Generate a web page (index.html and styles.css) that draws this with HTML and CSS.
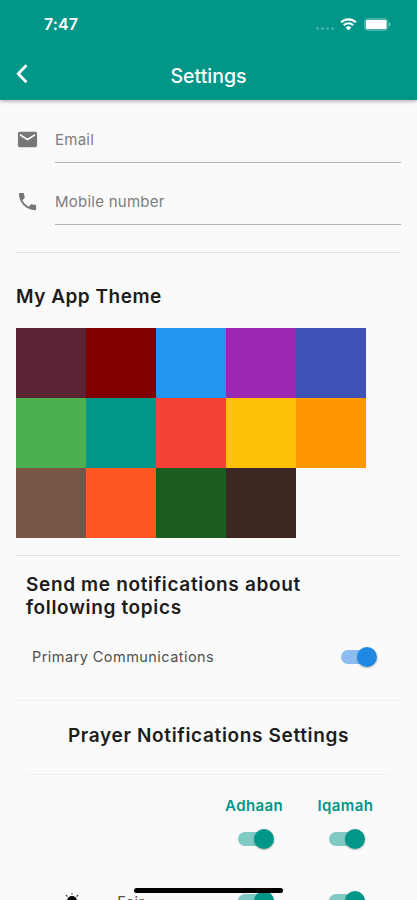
FILE: index.html
```html
<!DOCTYPE html>
<html lang="en">
<head>
  <meta charset="UTF-8" />
  <meta name="viewport" content="width=device-width, initial-scale=1.0" />
  <title>Settings</title>
  <link rel="stylesheet" href="styles.css">
</head>
<body>
  <div class="screen">
    <header class="header">
      <div class="status-bar">
        <span class="time">7:47</span>
        <div class="status-icons">
          <div class="signal"><i></i><i></i><i></i><i></i></div>
          <svg class="wifi" width="17" height="13" viewBox="0 0 17 13">
            <path d="M1.1 4.3a10.6 10.6 0 0 1 14.8 0" fill="none" stroke="#fff" stroke-width="2.3" />
            <path d="M3.8 7.2a6.8 6.8 0 0 1 9.4 0" fill="none" stroke="#fff" stroke-width="2" />
            <path d="M5.7 9.6a4.2 4.2 0 0 1 5.6 0L8.5 12.5z" fill="#fff" />
          </svg>
          <svg class="battery" width="27" height="13" viewBox="0 0 27 13">
            <rect x="0.5" y="0.5" width="23.5" height="12" rx="3" fill="none" stroke="#fff" stroke-opacity="0.3" />
            <rect x="1.7" y="1.7" width="21" height="9.6" rx="1.5" fill="#fff" />
            <path d="M25 4.3c1.8.6 1.8 3.8 0 4.4z" fill="#fff" fill-opacity="0.5" />
          </svg>
        </div>
      </div>
      <div class="nav">
        <svg class="back" width="13" height="20" viewBox="0 0 13 20">
          <path d="M10.5 1.3L2.2 9.8l8.3 8.5" fill="none" stroke="#fff" stroke-width="2.7" />
        </svg>
        <h1>Settings</h1>
      </div>
    </header>

    <main class="content">
      <div class="field">
        <svg width="23" height="23" viewBox="0 0 24 24">
          <path fill="#777" d="M20 4H4c-1.1 0-2 .9-2 2v12c0 1.1.9 2 2 2h16c1.1 0 2-.9 2-2V6c0-1.1-.9-2-2-2zm0 4l-8 5-8-5V6l8 5 8-5v2z" />
        </svg>
        <div class="input">Email</div>
      </div>
      <div class="field">
        <svg width="23" height="23" viewBox="0 0 24 24">
          <path fill="#777" d="M6.62 10.79c1.44 2.83 3.76 5.14 6.59 6.59l2.2-2.2c.27-.27.67-.36 1.02-.24 1.12.37 2.33.57 3.57.57.55 0 1 .45 1 1V20c0 .55-.45 1-1 1-9.39 0-17-7.61-17-17 0-.55.45-1 1-1h3.5c.55 0 1 .45 1 1 0 1.25.2 2.45.57 3.57.11.35.03.74-.25 1.02l-2.2 2.2z" />
        </svg>
        <div class="input">Mobile number</div>
      </div>

      <section class="theme">
        <h2>My App Theme</h2>
        <div class="swatches">
          <div class="plum"></div>
          <div class="maroon"></div>
          <div class="blue"></div>
          <div class="purple"></div>
          <div class="indigo"></div>
          <div class="green"></div>
          <div class="teal"></div>
          <div class="red"></div>
          <div class="amber"></div>
          <div class="orange"></div>
          <div class="brown"></div>
          <div class="deep-orange"></div>
          <div class="dark-green"></div>
          <div class="dark-brown"></div>
        </div>
      </section>

      <section class="topics">
        <h2>Send me notifications about<br>following topics</h2>
        <div class="topic">
          <span>Primary Communications</span>
          <div class="switch switch-blue"></div>
        </div>
      </section>

      <section class="prayers">
        <h2>Prayer Notifications Settings</h2>
        <div class="prayer-table">
          <div class="column-head adhaan">Adhaan</div>
          <div class="column-head">Iqamah</div>
          <div class="switch all-adhaan"></div>
          <div class="switch"></div>
          <svg class="sun" width="20" height="20" viewBox="0 0 20 20">
            <circle cx="10" cy="10" r="5" />
            <path d="M10 2v1.5M3.8 4l1.7 1.7M16.2 4l-1.7 1.7M1 10h2M17 10h2" stroke="#444" stroke-width="1.2" />
          </svg>
          <span class="prayer-name">Fajr</span>
          <div class="switch"></div>
          <div class="switch"></div>
        </div>
      </section>
    </main>
    <div class="home-indicator"></div>
  </div>
</body>
</html>
```

FILE: styles.css
```css
:root {
  --teal: #009688;
  --bg: #fafafa;
  --text: #1c1c1c;
  --line: #dedede;
}

* {
  box-sizing: border-box;
}

body {
  margin: 0;
  background: var(--bg);
  color: var(--text);
  font-family: Inter, Roboto, sans-serif;
}

.screen {
  position: relative;
  width: 417px;
  height: 900px;
  overflow: hidden;
}

svg {
  display: block;
}

h1, h2 {
  margin: 0;
}

.header {
  height: 100px;
  background: var(--teal);
  color: #fff;
  box-shadow: 0 1px 4px rgba(0, 0, 0, 0.35);
}

.status-bar {
  display: flex;
  justify-content: space-between;
  align-items: center;
  height: 48px;
  padding: 0 26px 0 44px;
}

.time {
  font-size: 16px;
  font-weight: 600;
  letter-spacing: 0.1px;
}

.status-icons {
  display: flex;
  align-items: center;
}

.signal {
  display: flex;
  gap: 2px;
  margin: 8px 6px 0 0;
}

.signal i {
  width: 3px;
  height: 3px;
  border-radius: 50%;
  background: rgba(255, 255, 255, 0.25);
}

.wifi {
  margin-right: 7px;
}

.nav {
  display: flex;
  align-items: center;
  height: 52px;
  padding: 0 16px 1px;
}

.nav h1 {
  flex: 1;
  padding: 4px 13px 0 0;
  text-align: center;
  font-size: 19.5px;
  font-weight: 500;
}

.content {
  padding: 8px 16px 0;
}

.field {
  display: flex;
  align-items: center;
  height: 62px;
}

.input {
  flex: 1;
  height: 47px;
  margin-left: 16px;
  border-bottom: 1px solid #b5b5b5;
  color: #7c7c7c;
  font-size: 15px;
  letter-spacing: 0.25px;
  line-height: 48px;
}

.theme {
  margin-top: 20px;
  border-top: 1px solid var(--line);
}

h2 {
  font-size: 19px;
  font-weight: 600;
  line-height: 23.5px;
  letter-spacing: 0.65px;
}

.theme h2 {
  padding: 32px 0 19px;
  letter-spacing: 0.5px;
}

.swatches {
  display: grid;
  grid-template-columns: repeat(5, 70px);
  grid-auto-rows: 70px;
}

.plum { background: #5b2333; }
.maroon { background: #800000; }
.blue { background: #2196f3; }
.purple { background: #9c27b0; }
.indigo { background: #3f51b5; }
.green { background: #4caf50; }
.teal { background: #009688; }
.red { background: #f44336; }
.amber { background: #ffc107; }
.orange { background: #ff9800; }
.brown { background: #795548; }
.deep-orange { background: #ff5722; }
.dark-green { background: #1b5e20; }
.dark-brown { background: #3e2723; }

.topics {
  height: 145px;
  margin-top: 17px;
  padding: 17px 24px 0 10px;
  border-top: 1px solid var(--line);
}

.topic {
  display: flex;
  justify-content: space-between;
  align-items: center;
  margin-top: 27px;
  padding-left: 6px;
  color: #505050;
  font-size: 14.5px;
  letter-spacing: 0.45px;
}

/* the knob is taller than the track */
.switch {
  position: relative;
  width: 36px;
  height: 20px;
}

.switch::before {
  content: "";
  position: absolute;
  top: 3px;
  left: 0;
  width: 32px;
  height: 14px;
  border-radius: 7px;
  background: #7fcac3;
}

.switch::after {
  content: "";
  position: absolute;
  top: 0;
  right: 0;
  width: 20px;
  height: 20px;
  border-radius: 50%;
  background: var(--teal);
  box-shadow: 0 1px 2px rgba(0, 0, 0, 0.3);
}

.switch-blue::before { background: #8dbdf0; }
.switch-blue::after { background: #1e88e5; }

.prayers {
  border-top: 1px solid #f0f0f0;
}

.prayers h2 {
  padding: 23px 0 27px;
  text-align: center;
}

.prayer-table {
  display: grid;
  grid-template-columns: repeat(4, 1fr);
  grid-template-rows: 22px 46px 78px;
  align-items: center;
  justify-items: center;
  margin: 0 10px;
  padding-top: 19px;
  border-top: 1px solid #f0f0f0;
}

.column-head {
  color: var(--teal);
  font-size: 15px;
  font-weight: 600;
  letter-spacing: 0.4px;
}

.adhaan,
.all-adhaan {
  grid-column: 3;
}

.prayer-table .switch {
  margin-left: 4px;
}

.prayer-name {
  justify-self: start;
  color: #505050;
  font-size: 14.5px;
  letter-spacing: 0.45px;
}

.home-indicator {
  position: absolute;
  left: 134px;
  bottom: 7px;
  width: 149px;
  height: 5px;
  border-radius: 3px;
  background: #000;
}
```
